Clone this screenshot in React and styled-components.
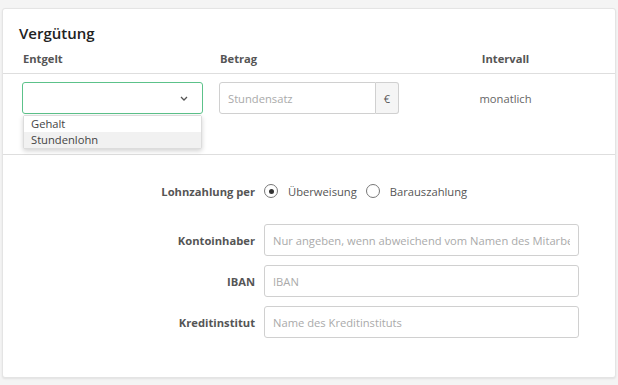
import React from 'react';
import styled, { createGlobalStyle } from 'styled-components';

const GlobalStyle = createGlobalStyle`
  body {
    margin: 0;
    background: #f4f4f4;
    font-family: "Open Sans", "Liberation Sans", sans-serif;
    color: #444;
  }
`;

const Card = styled.section`
  margin: 8px 2px 7px 2px;
  height: 370px;
  box-sizing: border-box;
  background: #fff;
  border: 1px solid #e4e4e4;
  border-radius: 3px;
  box-shadow: 0 1px 2px rgba(0, 0, 0, 0.08);
`;

const Title = styled.h2`
  margin: 0;
  padding: 13px 16px 0;
  font-size: 15px;
  line-height: 22px;
  font-weight: 600;
  color: #222;
`;

const Grid = styled.div`
  display: grid;
  grid-template-columns: 181px 180px 1fr;
  column-gap: 16px;
  padding: 0 19px;
`;

const HeadRow = styled(Grid)`
  height: 29px;
  align-items: center;
  border-bottom: 1px solid #dedede;
`;

const Head = styled.div`
  font-size: 11.2px;
  font-weight: 700;
  color: #555;
  padding-left: ${(p) => (p.$center ? 0 : 1)}px;
  text-align: ${(p) => (p.$center ? 'center' : 'left')};
`;

const BodyRow = styled(Grid)`
  padding-top: 8px;
  padding-bottom: 40px;
  align-items: center;
  border-bottom: 1px solid #dedede;
`;

const SelectWrap = styled.div`
  position: relative;
`;

const SelectBox = styled.div`
  height: 32px;
  box-sizing: border-box;
  border: 1px solid #5cc28a;
  border-radius: 3px;
  display: flex;
  align-items: center;
  justify-content: flex-end;
  padding-right: 14px;
  color: #555;
`;

const Menu = styled.ul`
  position: absolute;
  top: 33px;
  left: 1px;
  right: 1px;
  margin: 0;
  padding: 0;
  list-style: none;
  background: #fff;
  border: 1px solid #dcdcdc;
  border-radius: 2px;
  box-shadow: 0 2px 5px rgba(0, 0, 0, 0.18);
`;

const MenuItem = styled.li`
  font-size: 11.2px;
  line-height: 16px;
  padding-left: 7px;
  color: #444;
  background: ${(p) => (p.$active ? '#f1f1f1' : '#fff')};
`;

const InputGroup = styled.div`
  display: flex;
  height: 32px;
`;

const Input = styled.input`
  flex: 1;
  min-width: 0;
  height: 32px;
  box-sizing: border-box;
  border: 1px solid #d0d0d0;
  border-radius: ${(p) => (p.$addon ? '3px 0 0 3px' : '3px')};
  padding: 0 8px;
  font-family: inherit;
  font-size: 11.2px;
  color: #444;
  outline: none;
  &::placeholder {
    color: #aaa;
  }
`;

const Addon = styled.span`
  width: 23px;
  box-sizing: border-box;
  display: flex;
  align-items: center;
  justify-content: center;
  background: #f5f5f5;
  border: 1px solid #d0d0d0;
  border-left: none;
  border-radius: 0 3px 3px 0;
  font-size: 11px;
  color: #555;
`;

const Value = styled.div`
  text-align: center;
  font-size: 11.2px;
  color: #666;
`;

const Form = styled.div`
  display: grid;
  grid-template-columns: 233px 315px;
  column-gap: 9px;
  row-gap: 9px;
  padding: 25px 19px 0;
  align-items: center;
`;

const Label = styled.label`
  text-align: right;
  font-size: 11.2px;
  font-weight: 700;
  color: #555;
`;

const RadioRow = styled.div`
  display: flex;
  align-items: center;
  height: 22px;
  margin-bottom: 13px;
  white-space: nowrap;
`;

const RadioOption = styled.span`
  display: flex;
  align-items: center;
  gap: 10px;
  margin-right: 9px;
  font-size: 11.2px;
  color: #555;
`;

const RadioCircle = styled.span`
  width: 14px;
  height: 14px;
  box-sizing: border-box;
  border: 1px solid #777;
  border-radius: 50%;
  display: flex;
  align-items: center;
  justify-content: center;
  &::after {
    content: '';
    width: 5px;
    height: 5px;
    border-radius: 50%;
    background: ${(p) => (p.$checked ? '#333' : 'transparent')};
  }
`;

const LabelTop = styled(Label)`
  margin-bottom: 13px;
`;

const Chevron = () => (
  <svg width="8" height="5" viewBox="0 0 8 5" fill="none">
    <path d="M1 1l3 3 3-3" stroke="#555" strokeWidth="1.3" />
  </svg>
);

export default function App() {
  return (
    <>
      <GlobalStyle />
      <Card>
        <Title>Vergütung</Title>
        <HeadRow>
          <Head>Entgelt</Head>
          <Head>Betrag</Head>
          <Head $center>Intervall</Head>
        </HeadRow>
        <BodyRow>
          <SelectWrap>
            <SelectBox>
              <Chevron />
            </SelectBox>
            <Menu>
              <MenuItem>Gehalt</MenuItem>
              <MenuItem $active>Stundenlohn</MenuItem>
            </Menu>
          </SelectWrap>
          <InputGroup>
            <Input $addon placeholder="Stundensatz" />
            <Addon>€</Addon>
          </InputGroup>
          <Value>monatlich</Value>
        </BodyRow>
        <Form>
          <LabelTop>Lohnzahlung per</LabelTop>
          <RadioRow>
            <RadioOption>
              <RadioCircle $checked />
              Überweisung
            </RadioOption>
            <RadioOption>
              <RadioCircle />
              Barauszahlung
            </RadioOption>
          </RadioRow>
          <Label>Kontoinhaber</Label>
          <Input placeholder="Nur angeben, wenn abweichend vom Namen des Mitarbeiters" />
          <Label>IBAN</Label>
          <Input placeholder="IBAN" />
          <Label>Kreditinstitut</Label>
          <Input placeholder="Name des Kreditinstituts" />
        </Form>
      </Card>
    </>
  );
}
